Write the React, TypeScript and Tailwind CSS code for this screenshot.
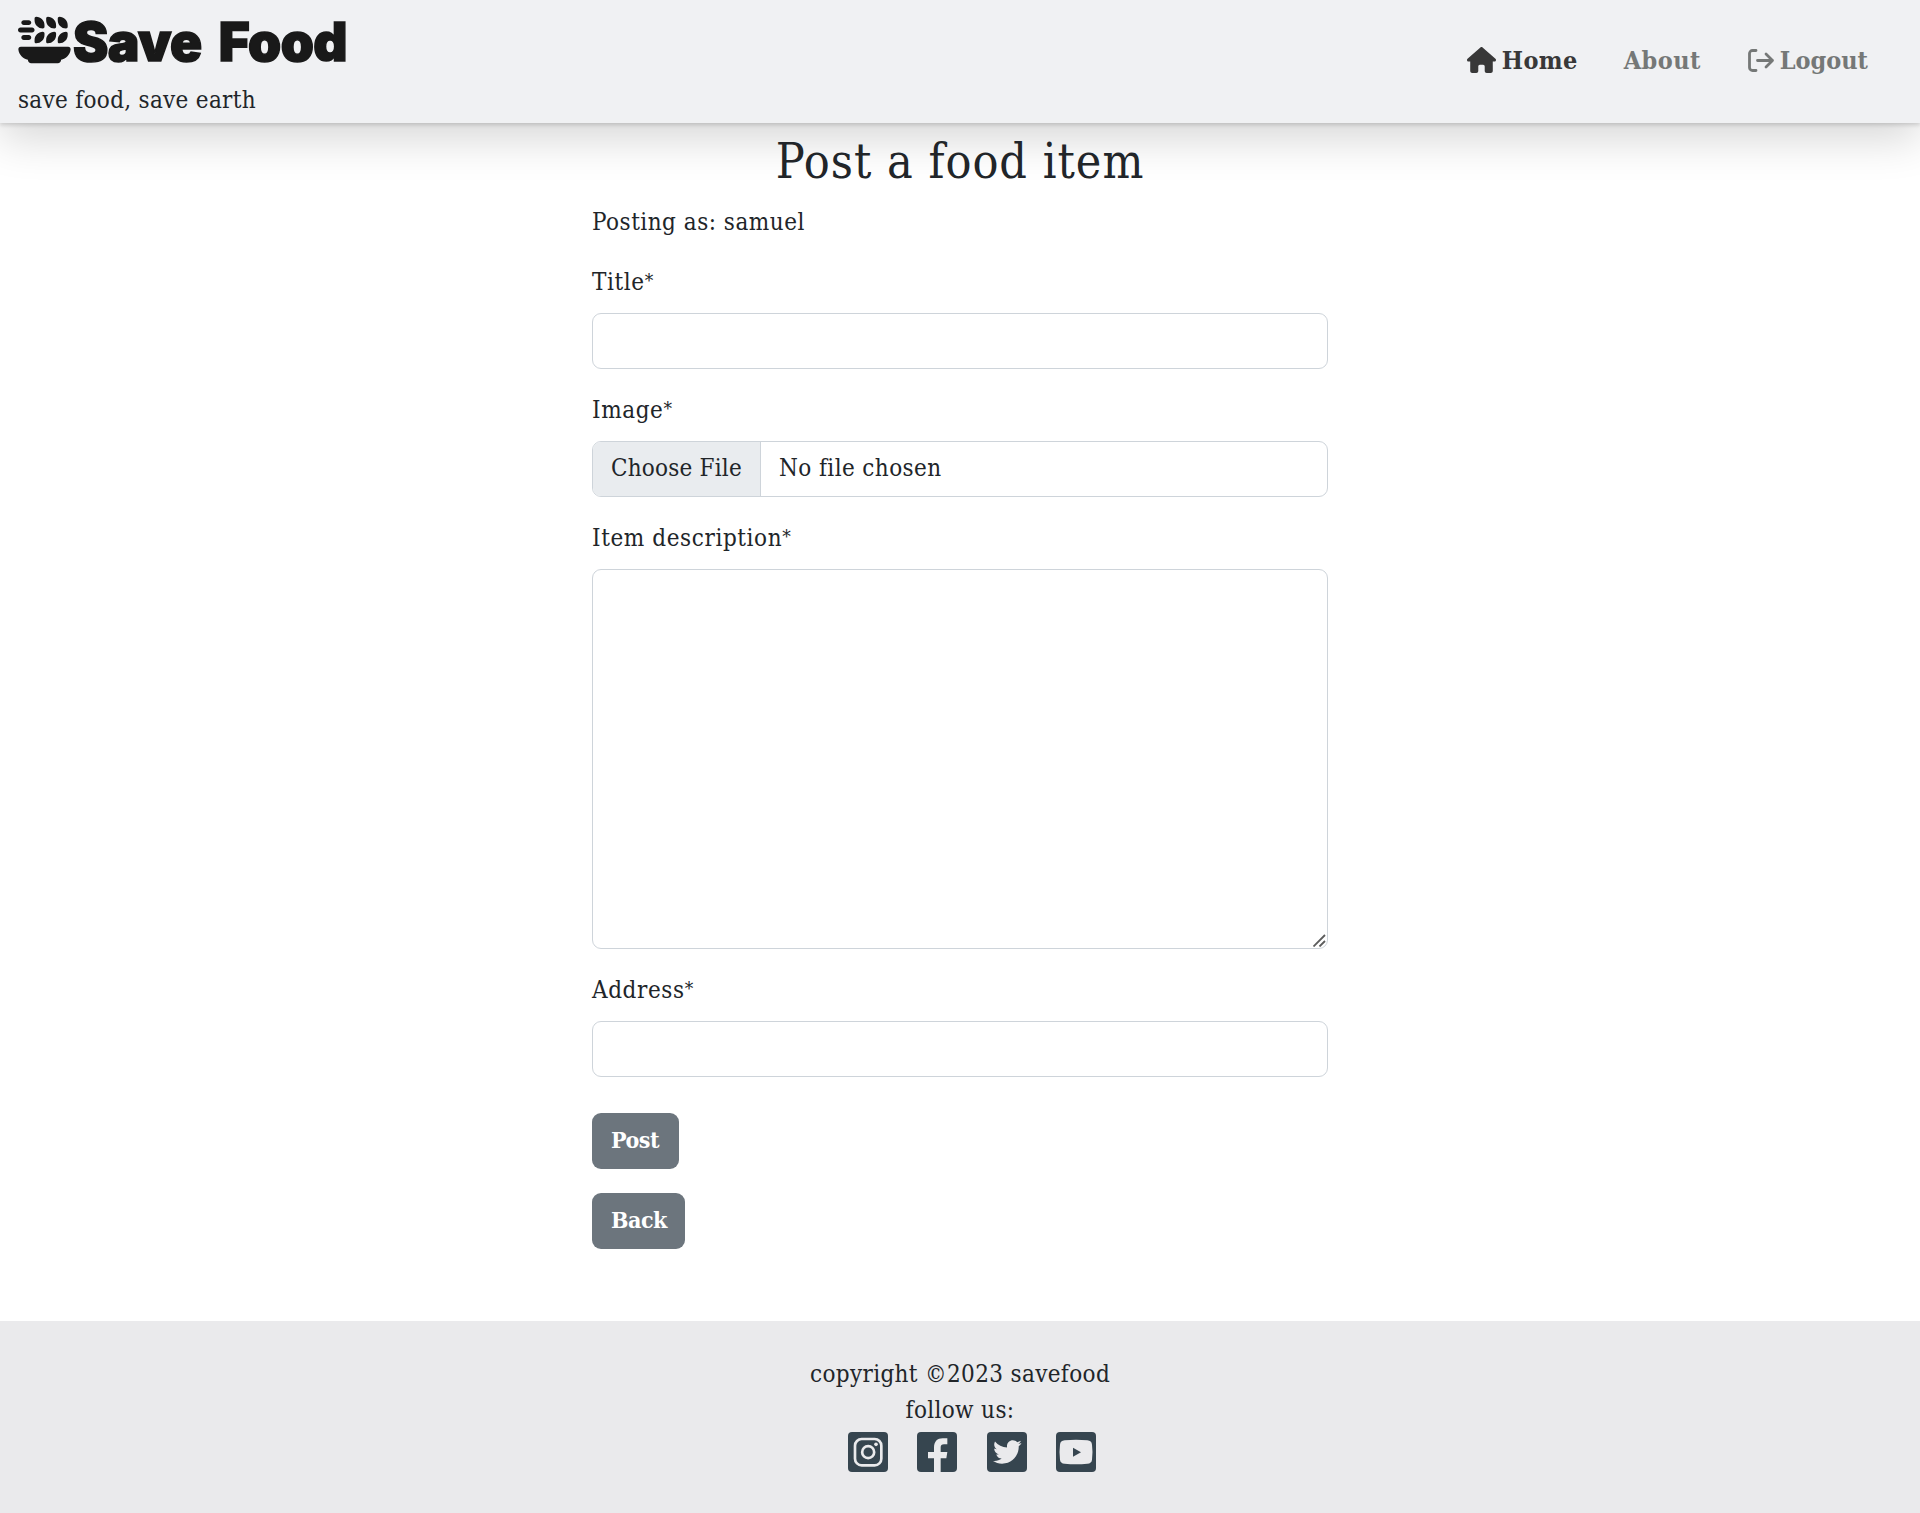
import React from "react";
import { FaPlateWheat, FaHouse, FaTwitter } from "react-icons/fa6";

const field = "block w-full rounded-[9px] border border-[#ced4da] bg-white";
const button = "flex h-14 items-center rounded-[9px] bg-[#6c757d] pb-[3px] text-[23px] font-bold tracking-[-0.5px] text-white";

function Label({ children }: { children: React.ReactNode }) {
  return (
    <label className="mb-3 block h-[38px] leading-[38px] tracking-[0.6px]">
      {children}
      <span className="align-[3px] text-[19px] leading-none">*</span>
    </label>
  );
}

function LogoutIcon() {
  return (
    <svg className="mb-px h-6 w-7" viewBox="0 0 28 24" fill="none" stroke="currentColor" strokeWidth="2.8" strokeLinecap="round" strokeLinejoin="round">
      <path d="M9 1.5H5.500a3 3 0 0 0-3 3v14a3 3 0 0 0 3 3H9" />
      <path d="M10.500 11.5h15M19 5l6.500 6.500L19 18" />
    </svg>
  );
}

function SocialTile({ children }: { children: React.ReactNode }) {
  return (
    <svg className="size-10" viewBox="0 0 120 120">
      <rect width="120" height="120" rx="12" fill="#36454f" />
      {children}
    </svg>
  );
}

export default function App() {
  return (
    <div className="flex h-[1513px] flex-col bg-white font-['DejaVu_Serif_Condensed','DejaVu_Serif',serif] text-[24px] leading-9 tracking-[0.3px] text-[#212529] [font-stretch:condensed]">
      <header className="flex h-[123px] shrink-0 justify-between bg-[#f0f1f3] px-[18px] shadow-[0_2px_4px_rgba(0,0,0,0.15),0_16px_44px_rgba(0,0,0,0.16)]">
        <div>
          <div className="flex h-[82px] items-start text-[#191919]">
            <FaPlateWheat className="mt-[13px] h-[54px] w-[53px]" />
            <span className="mt-[10px] ml-[2px] flex gap-[17px] font-['Inter'] text-[53px] leading-[65px] font-black tracking-[-0.5px] whitespace-nowrap [-webkit-text-stroke:1.5px_#191919]">
              <span>Save</span>
              <span>Food</span>
            </span>
          </div>
          <p className="whitespace-nowrap">save food, save earth</p>
        </div>
        <nav className="mt-[43px] mr-[34px] flex h-9 gap-[46px] text-[25px] font-bold tracking-normal text-[#757877]">
          <a className="flex items-center gap-1.5 tracking-[0.4px] text-[#383838]"><FaHouse className="mb-[3px] h-[26px] w-[29px]" /><span>Home</span></a>
          <a className="tracking-[0.4px]">About</a>
          <a className="flex items-center gap-[5px]"><LogoutIcon /><span>Logout</span></a>
        </nav>
      </header>
      <main className="mx-auto w-[736px] pt-[9px]">
        <h1 className="mb-3.5 h-[58px] text-center text-[48px] leading-[58px] tracking-[1px]">Post a food item</h1>
        <p className="mb-[23px] h-9 tracking-[0.5px]">Posting as: samuel</p>
        <Label>Title</Label>
        <input className={`${field} mb-[22px] h-14`} />
        <Label>Image</Label>
        <div className={`${field} mb-[22px] flex h-14 overflow-hidden`}>
          <span className="w-[168px] border-r border-[#ced4da] bg-[#e9ecef] pl-[18px] leading-[53px] tracking-[0.2px]">Choose File</span>
          <span className="pl-[18px] leading-[53px] tracking-[0.4px]">No file chosen</span>
        </div>
        <Label>Item description</Label>
        <div className="relative mb-[22px]">
          <textarea className={`${field} h-[380px] resize-none`} />
          <svg className="absolute right-[2px] bottom-[2px] size-[13px]" viewBox="0 0 13 13" stroke="#5c5c5c" strokeWidth="1.8">
            <path d="M.5 12.500 12 1M6.500 12.500 12 7" />
          </svg>
        </div>
        <Label>Address</Label>
        <input className={`${field} mb-9 h-14`} />
        <button className={`${button} mb-6 w-[87px] pl-[19px]`}>Post</button>
        <button className={`${button} w-[93px] pl-[19px]`}>Back</button>
      </main>
      <footer className="mt-auto flex h-[192px] flex-col items-center bg-[#eaeaec] pt-[35px] tracking-[0.35px]">
        <p>copyright ©2023 savefood</p>
        <p>follow us:</p>
        <div className="mt-1 ml-6 flex gap-[29.4px]">
          <SocialTile>
            <g fill="none" stroke="#eaeaec" strokeWidth="8">
              <rect x="21" y="21" width="79" height="79" rx="20" />
              <circle cx="60.500" cy="60.500" r="18" />
            </g>
            <circle cx="84" cy="37" r="5.500" fill="#eaeaec" />
          </SocialTile>
          <SocialTile>
            <path fill="#eaeaec" d="M51 120V79H33V60h18V46c0-17 10-27 26-27h14v18H81c-7 0-10 3-10 9v14h20l-3 19H71v41z" />
          </SocialTile>
          <SocialTile>
            <FaTwitter x={18} y={17} size={86} color="#eaeaec" />
          </SocialTile>
          <SocialTile>
            <path fill="#eaeaec" d="M26 25Q60 22 94 25Q107 26 108 38Q111 60 108 83Q107 94 94 95Q60 98 26 95Q13 94 12 83Q9 60 12 38Q13 26 26 25z" />
            <path fill="#36454f" d="M51 47v27l24-13.500z" />
          </SocialTile>
        </div>
      </footer>
    </div>
  );
}
